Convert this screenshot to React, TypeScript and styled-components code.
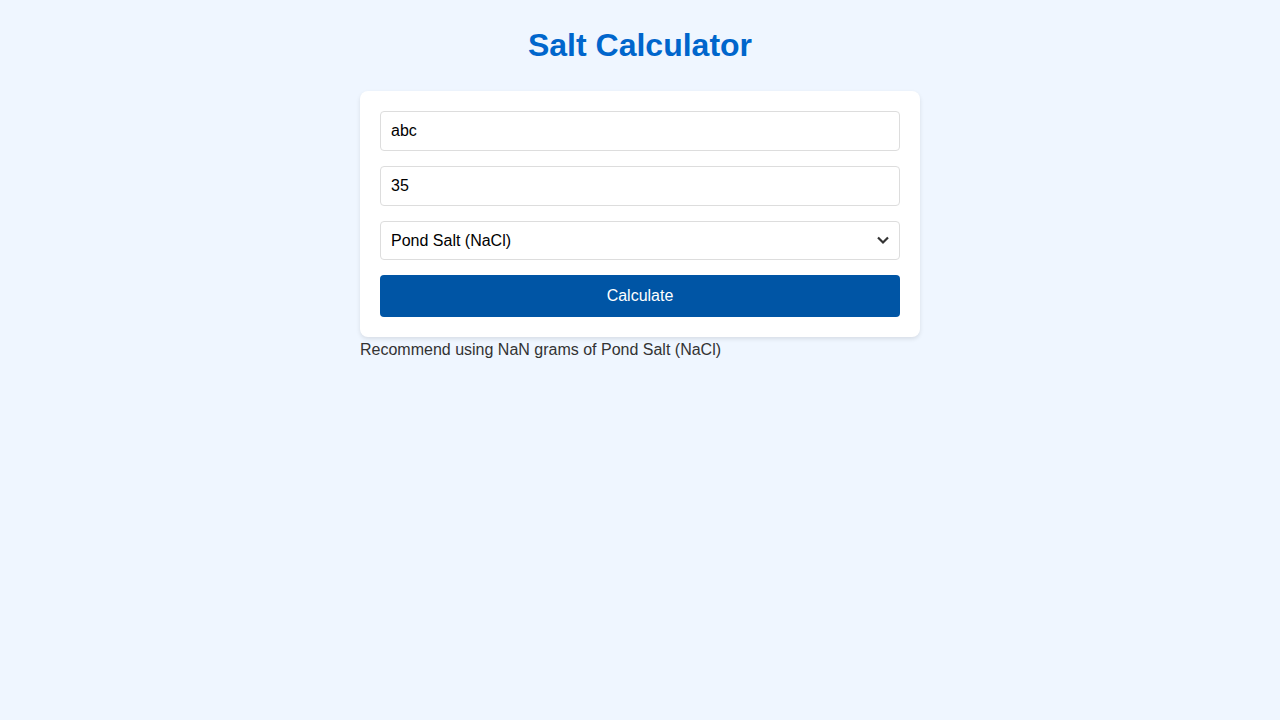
import { useState } from 'react';
import styled, { createGlobalStyle } from 'styled-components';

const GlobalStyle = createGlobalStyle`
  html, body {
    margin: 0;
    padding: 0;
    background: #eff6ff;
    font-family: 'Liberation Sans', Arial, sans-serif;
  }
`;

const Page = styled.div`
  min-height: 720px;
  display: flex;
  flex-direction: column;
  align-items: center;
  padding-top: 27px;
  box-sizing: border-box;
`;

const Title = styled.h1`
  margin: 0 0 27px;
  font-size: 32px;
  line-height: 37px;
  font-weight: bold;
  color: #0066cc;
`;

const Column = styled.div`
  width: 560px;
`;

const Card = styled.form`
  background: #ffffff;
  border-radius: 8px;
  padding: 20px;
  box-shadow: 0 2px 4px rgba(0, 0, 0, 0.1);
  display: flex;
  flex-direction: column;
  gap: 15px;
`;

const Field = styled.input`
  height: 40px;
  box-sizing: border-box;
  border: 1px solid #dddddd;
  border-radius: 4px;
  padding: 0 10px;
  font-family: inherit;
  font-size: 16px;
  color: #000;
  outline: none;
`;

const SelectWrap = styled.div`
  position: relative;
`;

const Select = styled.select`
  width: 100%;
  height: 39px;
  box-sizing: border-box;
  border: 1px solid #dddddd;
  border-radius: 4px;
  padding: 0 10px;
  font-family: inherit;
  font-size: 16px;
  color: #000;
  background: #fff;
  appearance: none;
  outline: none;
`;

const Chevron = styled.svg`
  position: absolute;
  right: 10px;
  top: 14px;
  pointer-events: none;
`;

const Button = styled.button`
  height: 42px;
  border: none;
  border-radius: 4px;
  background: #0055a5;
  color: #ffffff;
  font-family: inherit;
  font-size: 16px;
  cursor: pointer;
`;

const Result = styled.p`
  margin: 4px 0 0;
  font-size: 16px;
  line-height: 18px;
  color: #333333;
`;

export default function App() {
  const [volume, setVolume] = useState('abc');
  const [salinity, setSalinity] = useState('35');
  const [salt, setSalt] = useState('Pond Salt (NaCl)');

  return (
    <>
      <GlobalStyle />
      <Page>
        <Title>Salt Calculator</Title>
        <Column>
          <Card onSubmit={(e) => e.preventDefault()}>
            <Field value={volume} onChange={(e) => setVolume(e.target.value)} />
            <Field value={salinity} onChange={(e) => setSalinity(e.target.value)} />
            <SelectWrap>
              <Select value={salt} onChange={(e) => setSalt(e.target.value)}>
                <option>Pond Salt (NaCl)</option>
                <option>Sea Salt</option>
                <option>Epsom Salt</option>
              </Select>
              <Chevron width="14" height="10" viewBox="0 0 14 10">
                <path d="M2 2.5 L7 7.5 L12 2.5" fill="none" stroke="#333" strokeWidth="2.2" />
              </Chevron>
            </SelectWrap>
            <Button type="submit">Calculate</Button>
          </Card>
          <Result>Recommend using NaN grams of {salt}</Result>
        </Column>
      </Page>
    </>
  );
}
